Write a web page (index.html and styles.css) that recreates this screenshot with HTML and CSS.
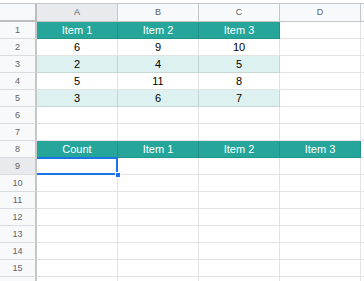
FILE: index.html
```html
<!DOCTYPE html>
<html lang="en">
<head>
    <meta charset="UTF-8">
    <meta name="viewport" content="width=device-width, initial-scale=1.0">
    <title>Sheet</title>
    <link rel="stylesheet" href="styles.css">
</head>
<body>

    <div class="sheet">
        <div class="corner"></div>
        <div class="ch sel">A</div>
        <div class="ch">B</div>
        <div class="ch">C</div>
        <div class="ch">D</div>
        <div class="ch end"></div>

        <div class="rh">1</div>
        <div class="c hd">Item 1</div>
        <div class="c hd">Item 2</div>
        <div class="c hd">Item 3</div>
        <div class="c"></div>
        <div class="c end"></div>

        <div class="rh">2</div>
        <div class="c">6</div>
        <div class="c">9</div>
        <div class="c">10</div>
        <div class="c"></div>
        <div class="c end"></div>

        <div class="rh">3</div>
        <div class="c alt">2</div>
        <div class="c alt">4</div>
        <div class="c alt">5</div>
        <div class="c"></div>
        <div class="c end"></div>

        <div class="rh">4</div>
        <div class="c">5</div>
        <div class="c">11</div>
        <div class="c">8</div>
        <div class="c"></div>
        <div class="c end"></div>

        <div class="rh">5</div>
        <div class="c alt">3</div>
        <div class="c alt">6</div>
        <div class="c alt">7</div>
        <div class="c"></div>
        <div class="c end"></div>

        <div class="rh">6</div>
        <div class="c"></div><div class="c"></div><div class="c"></div><div class="c"></div><div class="c end"></div>

        <div class="rh">7</div>
        <div class="c"></div><div class="c"></div><div class="c"></div><div class="c"></div><div class="c end"></div>

        <div class="rh">8</div>
        <div class="c hd">Count</div>
        <div class="c hd">Item 1</div>
        <div class="c hd">Item 2</div>
        <div class="c hd">Item 3</div>
        <div class="c end"></div>

        <div class="rh sel">9</div>
        <div class="c active"><span class="handle"></span></div><div class="c"></div><div class="c"></div><div class="c"></div><div class="c end"></div>

        <div class="rh">10</div>
        <div class="c"></div><div class="c"></div><div class="c"></div><div class="c"></div><div class="c end"></div>

        <div class="rh">11</div>
        <div class="c"></div><div class="c"></div><div class="c"></div><div class="c"></div><div class="c end"></div>

        <div class="rh">12</div>
        <div class="c"></div><div class="c"></div><div class="c"></div><div class="c"></div><div class="c end"></div>

        <div class="rh">13</div>
        <div class="c"></div><div class="c"></div><div class="c"></div><div class="c"></div><div class="c end"></div>

        <div class="rh">14</div>
        <div class="c"></div><div class="c"></div><div class="c"></div><div class="c"></div><div class="c end"></div>

        <div class="rh">15</div>
        <div class="c"></div><div class="c"></div><div class="c"></div><div class="c"></div><div class="c end"></div>

        <!-- row 16 only peeks in at the bottom edge -->
        <div class="rh"></div>
        <div class="c"></div><div class="c"></div><div class="c"></div><div class="c"></div><div class="c end"></div>
    </div>

</body>
</html>
```

FILE: styles.css
```css
* {
    box-sizing: border-box;
    margin: 0;
    padding: 0;
}
body {
    font-family: 'Liberation Sans', Arial, sans-serif;
    background-color: #fff;
    padding-top: 3px;
    height: 281px;
    overflow: hidden;
}
.sheet {
    display: grid;
    grid-template-columns: 37px 81px 81px 81px 81px 1fr;
    border-top: 1px solid #c4c7c5;
}
.corner {
    height: 18px;
    background-color: #f8f9fa;
    border-right: 2px solid #bdbdbd;
    border-bottom: 2px solid #bdbdbd;
}
.ch {
    height: 18px;
    background-color: #f8f9fa;
    border-right: 1px solid #c4c7c5;
    border-bottom: 1px solid #c4c7c5;
    color: #5f6368;
    font-size: 9px;
    line-height: 17px;
    text-align: center;
}
.ch.sel, .rh.sel {
    background-color: #e8eaed;
}
.ch.end, .c.end {
    border-right: none;
}
.rh {
    height: 17px;
    background-color: #f8f9fa;
    border-right: 2px solid #c4c7c5;
    border-bottom: 1px solid #dadce0;
    color: #5f6368;
    font-size: 9px;
    line-height: 16px;
    text-align: center;
}
.c {
    height: 17px;
    border-right: 1px solid rgba(0, 0, 0, 0.11);
    border-bottom: 1px solid rgba(0, 0, 0, 0.11);
    color: #000;
    font-size: 11px;
    line-height: 16px;
    text-align: center;
    white-space: nowrap;
}
.hd {
    background-color: #26a69a;
    color: #fff;
}
.alt {
    background-color: #ddf2f0;
}
.active {
    position: relative;
}
.active::after {
    content: '';
    position: absolute;
    top: -1px;
    left: 0;
    right: -1px;
    bottom: -1px;
    border: 2px solid #1a73e8;
    border-left: none;
}
.handle {
    position: absolute;
    right: -4px;
    bottom: -4px;
    width: 6px;
    height: 6px;
    background-color: #1a73e8;
    border: 1px solid #fff;
    z-index: 2;
}
```
